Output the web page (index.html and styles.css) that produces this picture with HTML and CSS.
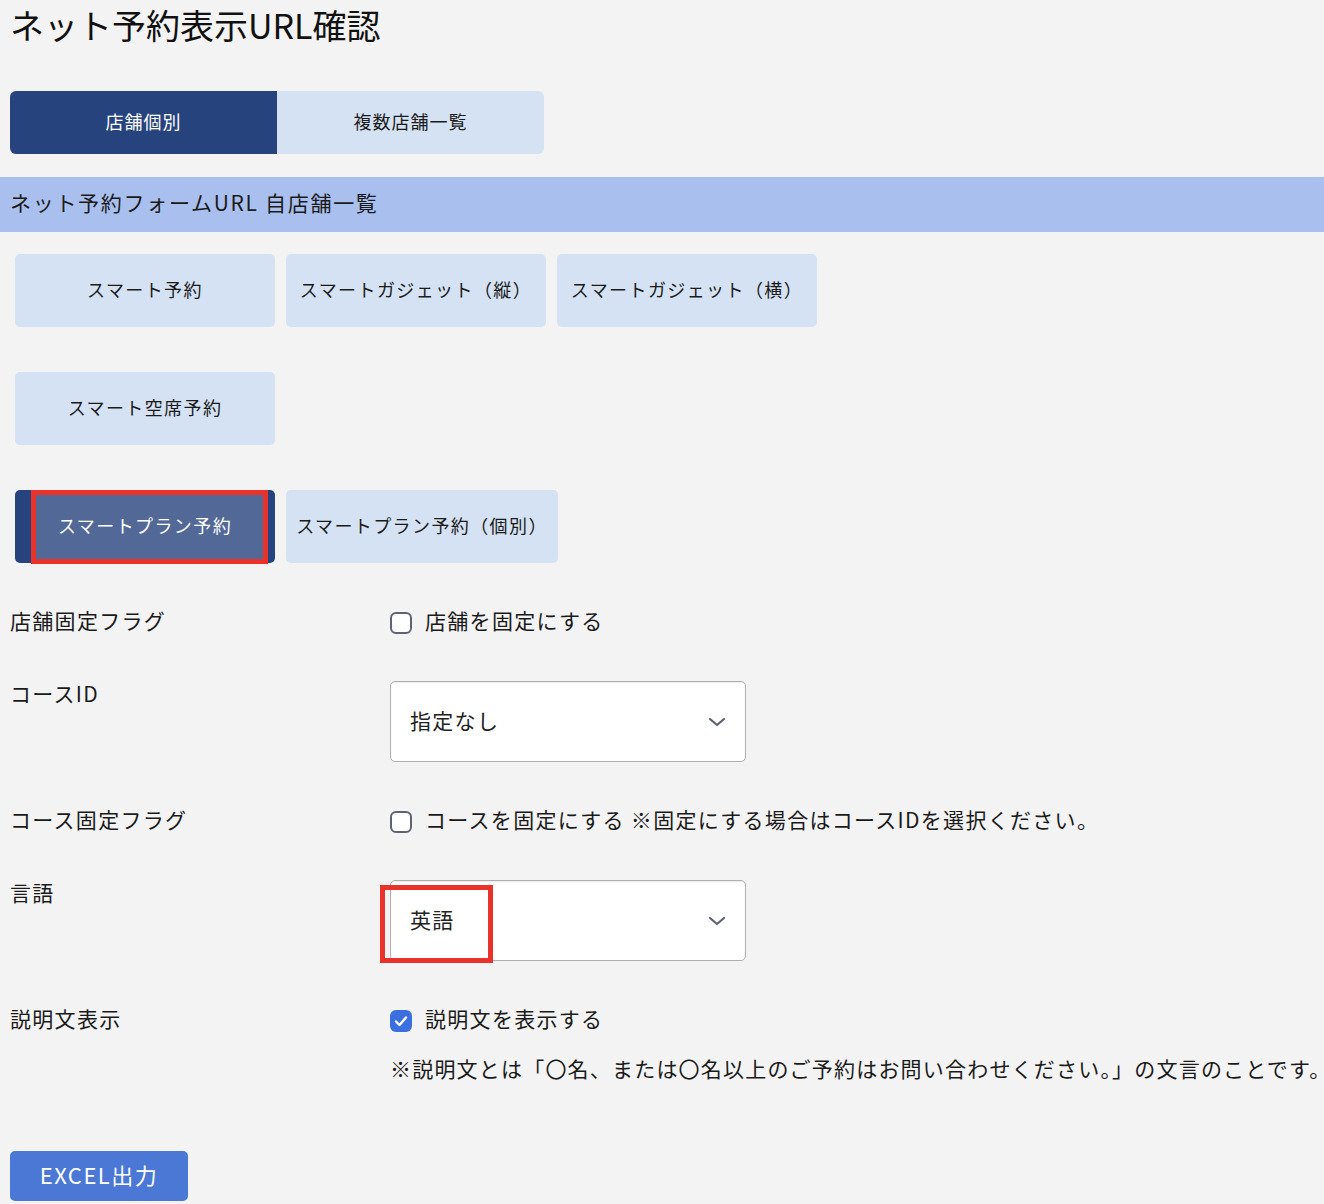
FILE: index.html
```html
<!DOCTYPE html>
<html lang="ja">
<head>
<meta charset="utf-8">
<title>ネット予約表示URL確認</title>
<link rel="stylesheet" href="styles.css">
</head>
<body>
<h1 class="title">ネット予約表示URL確認</h1>

<div class="tabs">
  <div class="tab tab-active">店舗個別</div>
  <div class="tab">複数店舗一覧</div>
</div>

<div class="section-head">ネット予約フォームURL 自店舗一覧</div>

<div class="btn-area">
  <div class="btn-row">
    <div class="type-btn">スマート予約</div>
    <div class="type-btn">スマートガジェット（縦）</div>
    <div class="type-btn">スマートガジェット（横）</div>
  </div>
  <div class="btn-row">
    <div class="type-btn">スマート空席予約</div>
  </div>
  <div class="btn-row">
    <div class="type-btn type-btn-active">スマートプラン予約<span class="mark mark-btn"></span></div>
    <div class="type-btn type-btn-wide">スマートプラン予約（個別）</div>
  </div>
</div>

<div class="form">
  <div class="form-row">
    <div class="label">店舗固定フラグ</div>
    <div class="control check-line">
      <span class="check"></span><span class="txt">店舗を固定にする</span>
    </div>
  </div>
  <div class="form-row">
    <div class="label">コースID</div>
    <div class="control">
      <div class="select"><span class="txt">指定なし</span>
        <svg class="chev" width="18" height="10" viewBox="0 0 18 10"><path d="M2 2 L9 8 L16 2" fill="none" stroke="#5c6272" stroke-width="2.2" stroke-linecap="round" stroke-linejoin="round"/></svg>
      </div>
    </div>
  </div>
  <div class="form-row">
    <div class="label">コース固定フラグ</div>
    <div class="control check-line">
      <span class="check"></span><span class="txt">コースを固定にする ※固定にする場合はコースIDを選択ください。</span>
    </div>
  </div>
  <div class="form-row">
    <div class="label">言語</div>
    <div class="control">
      <div class="select"><span class="txt">英語</span>
        <svg class="chev" width="18" height="10" viewBox="0 0 18 10"><path d="M2 2 L9 8 L16 2" fill="none" stroke="#5c6272" stroke-width="2.2" stroke-linecap="round" stroke-linejoin="round"/></svg>
        <span class="mark mark-select"></span>
      </div>
    </div>
  </div>
  <div class="form-row">
    <div class="label">説明文表示</div>
    <div class="control">
      <div class="check-line">
        <span class="check check-on"><svg width="22" height="22" viewBox="0 0 22 22"><path d="M6 11.5 L9.5 15 L16 7.5" fill="none" stroke="#fff" stroke-width="2.4" stroke-linecap="round" stroke-linejoin="round"/></svg></span><span class="txt">説明文を表示する</span>
      </div>
      <div class="note">※説明文とは「〇名、または〇名以上のご予約はお問い合わせください。」の文言のことです。</div>
    </div>
  </div>
</div>

<div class="excel-btn">EXCEL出力</div>
</body>
</html>
```

FILE: styles.css
```css
html, body {
  margin: 0;
  padding: 0;
}
body {
  background: #f3f3f3;
  color: #1a1a1a;
  font-family: "Noto Sans CJK JP", "Noto Sans", sans-serif;
  width: 1324px;
  overflow: hidden;
  padding-bottom: 4px;
}
.title {
  margin: 0;
  padding: 1px 10px 0;
  font-size: 34px;
  font-weight: 400;
  line-height: 47px;
  color: #111;
}
.tabs {
  display: flex;
  margin: 43px 0 0 10px;
  width: 534px;
}
.tab {
  width: 267px;
  height: 63px;
  box-sizing: border-box;
  padding-bottom: 3px;
  display: flex;
  align-items: center;
  justify-content: center;
  font-size: 18px;
  letter-spacing: 1px;
  background: #d5e2f3;
  color: #1a1a1a;
}
.tab:first-child {
  border-radius: 6px 0 0 6px;
}
.tab:last-child {
  border-radius: 0 6px 6px 0;
}
.tab-active {
  background: #27437e;
  color: #fff;
}
.section-head {
  margin-top: 23px;
  height: 55px;
  box-sizing: border-box;
  line-height: 51px;
  padding: 0 0 4px 10px;
  background: #a9c0ee;
  font-size: 21px;
  letter-spacing: 1.7px;
}
.btn-area {
  padding: 22px 0 0 15px;
  display: flex;
  flex-direction: column;
  gap: 45px;
}
.btn-row {
  display: flex;
  gap: 11px;
}
.type-btn {
  position: relative;
  width: 260px;
  height: 73px;
  box-sizing: border-box;
  padding-bottom: 3px;
  display: flex;
  align-items: center;
  justify-content: center;
  background: #d5e2f3;
  border-radius: 5px;
  font-size: 18px;
  letter-spacing: 1.4px;
  color: #1a1a1a;
  white-space: nowrap;
}
.type-btn-wide {
  width: 272px;
}
.type-btn-active {
  background: #27437e;
  color: #fff;
}
.mark {
  position: absolute;
  border: 5px solid #e8322a;
  box-sizing: border-box;
  pointer-events: none;
}
.mark-btn {
  left: 16px;
  top: 0;
  width: 237px;
  height: 74px;
  background: rgba(255, 255, 255, 0.2);
}
.form {
  margin-top: 45px;
  padding-left: 10px;
  display: flex;
  flex-direction: column;
  gap: 45px;
}
.form-row {
  display: grid;
  grid-template-columns: 380px 1fr;
  font-size: 21px;
  letter-spacing: 1.3px;
}
.label,
.txt,
.note {
  line-height: 24px;
  padding-bottom: 4px;
}
.check-line {
  display: flex;
  align-items: center;
  gap: 13px;
  white-space: nowrap;
}
.check {
  width: 22px;
  height: 22px;
  box-sizing: border-box;
  border: 2px solid #5d6374;
  border-radius: 6px;
  background: #fff;
  flex: none;
  margin-top: 1px;
}
.check-on {
  border: none;
  background: #3b6fe0;
  display: block;
}
.check-on svg {
  display: block;
}
.select {
  position: relative;
  width: 356px;
  height: 81px;
  box-sizing: border-box;
  border: 1px solid #aeaeae;
  border-radius: 5px;
  background: #fff;
  box-shadow: inset 0 1px 1px rgba(0, 0, 0, 0.08);
  display: flex;
  align-items: center;
  justify-content: space-between;
  padding: 0 19px 0 19px;
  color: #222;
}
.chev {
  display: block;
}
.mark-select {
  left: -11px;
  top: 4px;
  width: 113px;
  height: 78px;
}
.note {
  margin-top: 22px;
  white-space: nowrap;
  letter-spacing: 1.2px;
}
.excel-btn {
  margin: 67px 0 0 10px;
  width: 178px;
  height: 50px;
  box-sizing: border-box;
  padding-bottom: 4px;
  border-radius: 5px;
  background: #4a78d4;
  color: #fff;
  font-size: 22px;
  letter-spacing: 1.5px;
  display: flex;
  align-items: center;
  justify-content: center;
}
```
